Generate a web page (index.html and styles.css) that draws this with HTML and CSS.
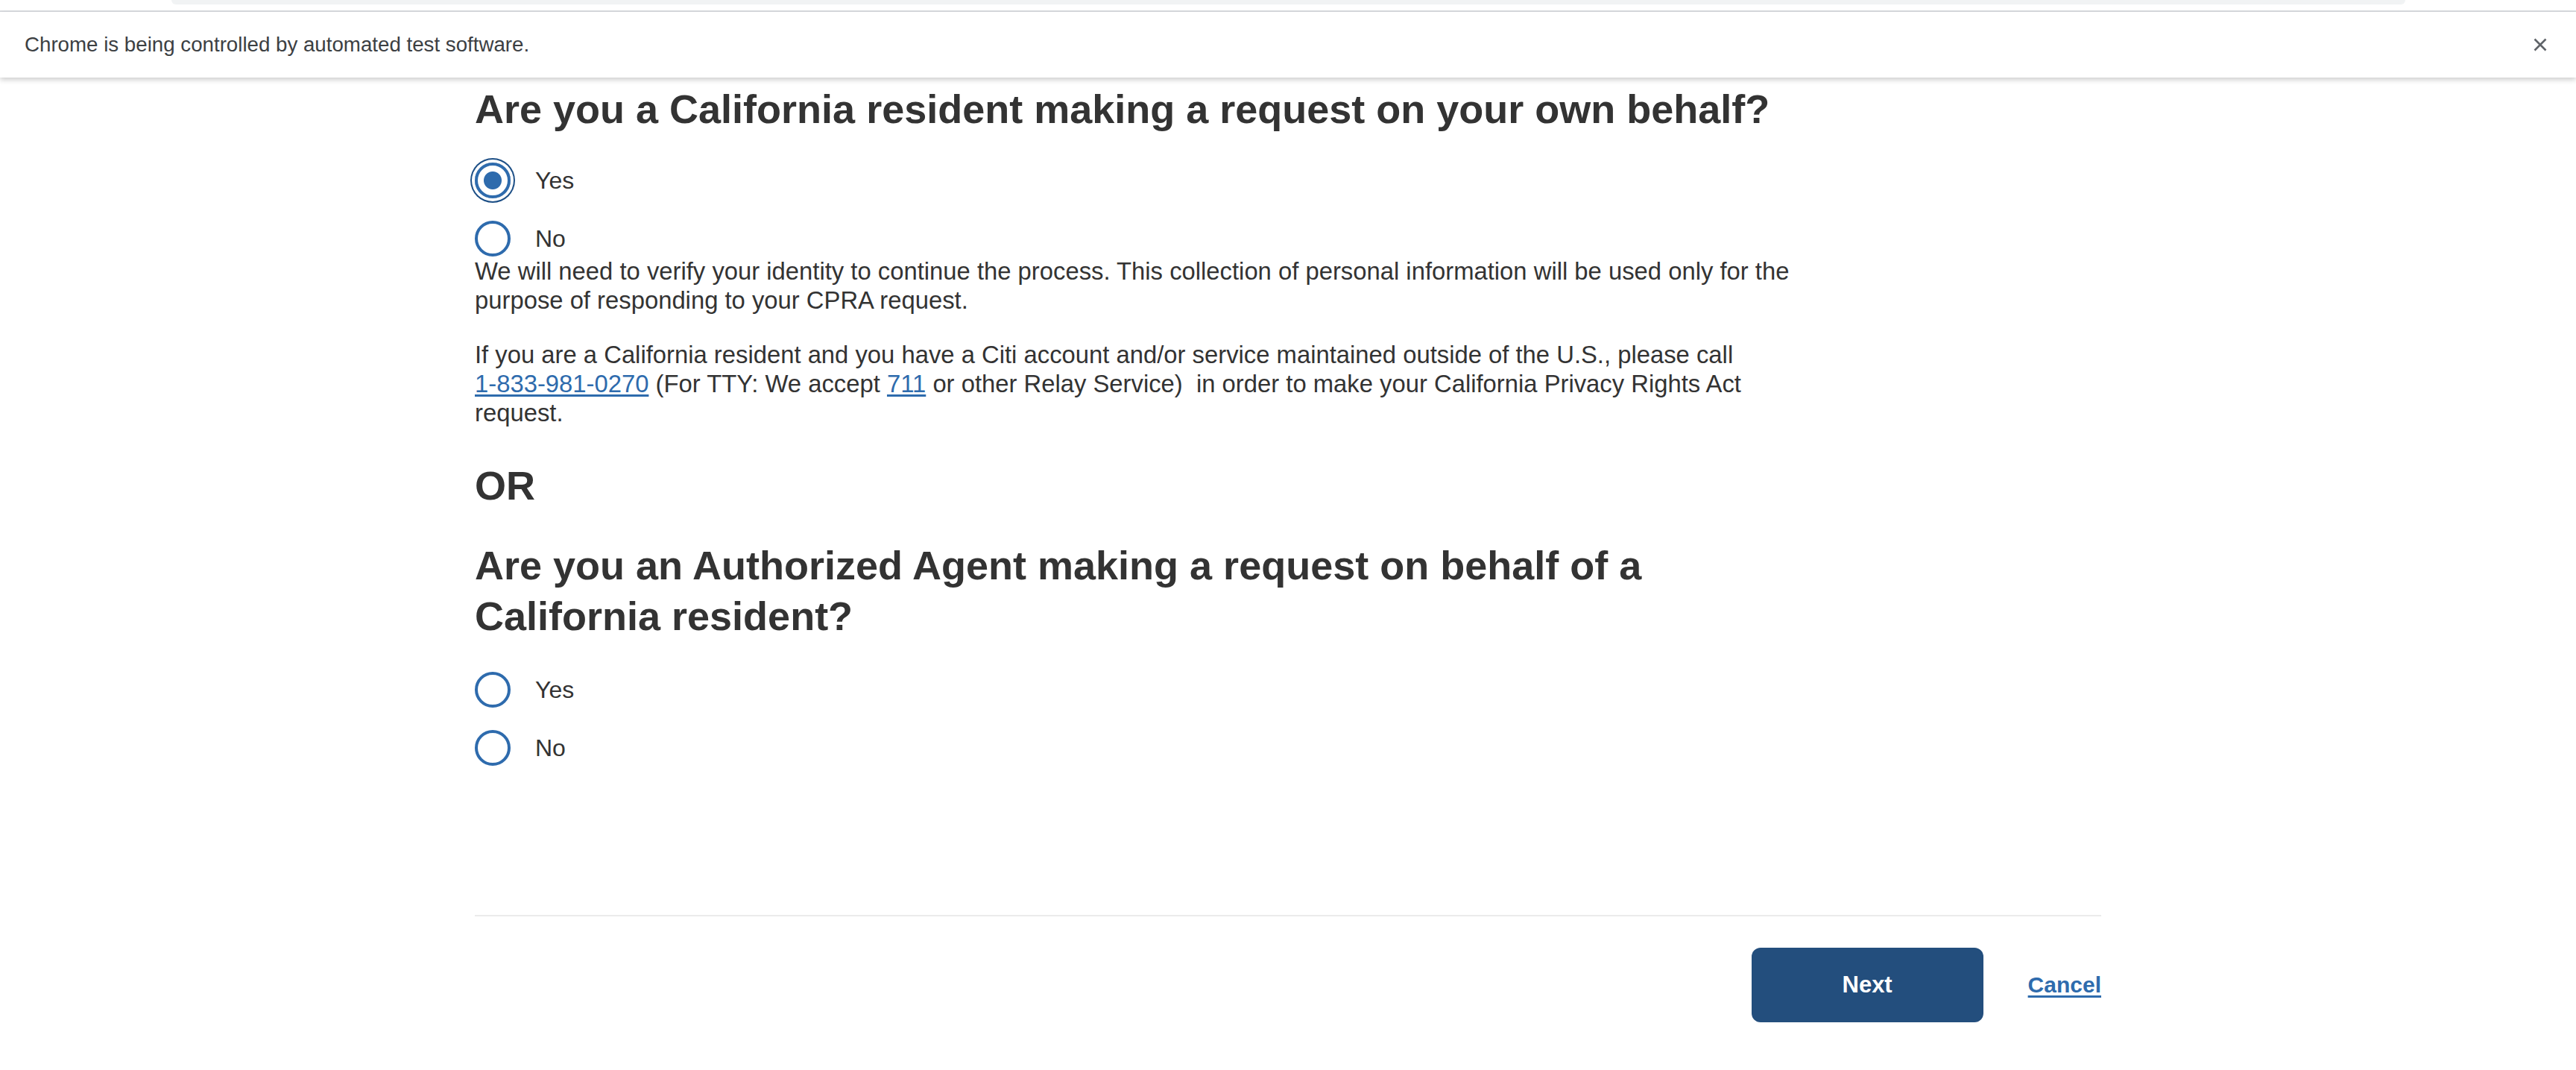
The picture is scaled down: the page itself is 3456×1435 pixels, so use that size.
FILE: index.html
```html
<!DOCTYPE html>
<html lang="en">
<head>
<meta charset="utf-8">
<title>CPRA Request</title>
<link rel="stylesheet" href="styles.css">
</head>
<body>
<div class="chrome"><div class="chrome-pill"></div></div>
<div class="infobar">
  <span class="infobar-text">Chrome is being controlled by automated test software.</span>
  <svg class="infobar-close" width="18" height="18" viewBox="0 0 18 18" aria-label="Close"><path d="M1.5 1.5 L16.5 16.5 M16.5 1.5 L1.5 16.5" stroke="#5f6368" stroke-width="2.6" stroke-linecap="butt" fill="none"/></svg>
</div>
<main class="page">
  <div class="col">
    <h1 class="heading">Are you a California resident making a request on your own behalf?</h1>
    <div class="radios">
      <label class="radio"><input type="radio" name="own" class="radio-input radio-focus" checked><span>Yes</span></label>
      <label class="radio"><input type="radio" name="own" class="radio-input"><span>No</span></label>
    </div>
    <p class="text">We will need to verify your identity to continue the process. This collection of personal information will be used only for the purpose of responding to your CPRA request.</p>
    <p class="text text-gap">If you are a California resident and you have a Citi account and/or service maintained outside of the U.S., please call <a class="link" href="#">1-833-981-0270</a>&nbsp;(For TTY: We accept <a class="link" href="#">711</a> or other Relay Service)&nbsp; in order to make your California Privacy Rights Act request.</p>
    <h2 class="heading or">OR</h2>
    <h2 class="heading heading-gap">Are you an Authorized Agent making a request on behalf of a California resident?</h2>
    <div class="radios radios-2">
      <label class="radio"><input type="radio" name="agent" class="radio-input"><span>Yes</span></label>
      <label class="radio"><input type="radio" name="agent" class="radio-input"><span>No</span></label>
    </div>
  </div>
  <div class="divider"></div>
  <div class="actions">
    <button class="btn-next" type="button">Next</button>
    <a class="cancel" href="#">Cancel</a>
  </div>
</main>
</body>
</html>
```

FILE: styles.css
```css
* { box-sizing: border-box; }
html, body { margin: 0; padding: 0; background: #ffffff; }
body { font-family: "Liberation Sans", Arial, sans-serif; color: #333333; }

.chrome { height: 16px; border-bottom: 2px solid #dadce0; }
.chrome-pill { margin-left: 230px; width: 2997px; height: 6px; background: #f1f3f4; border-radius: 0 0 18px 18px; }

.infobar {
  height: 88px;
  display: flex;
  align-items: center;
  justify-content: space-between;
  padding: 0 39px 0 33px;
  box-shadow: 0 3px 7px rgba(0, 0, 0, 0.2);
  font-family: "Liberation Sans", Arial, sans-serif;
  font-size: 27.7px;
  color: #3c4043;
}
.infobar-close { display: block; }

.page { width: 2182px; margin: 0 auto; padding-top: 8px; }
.col { width: 1790px; }

.heading { margin: 0; font-size: 54px; line-height: 68px; font-weight: 700; color: #333333; }
.or { margin-top: 44px; }
.heading-gap { margin-top: 39px; }

.radios { margin-top: 38px; display: flex; flex-direction: column; gap: 30px; }
.radios-2 { margin-top: 41px; }
.radio { display: flex; align-items: center; gap: 33px; height: 48px; font-size: 32px; color: #333333; }
.radio-input {
  appearance: none;
  -webkit-appearance: none;
  margin: 0;
  width: 48px;
  height: 48px;
  border: 4px solid #2e6bad;
  border-radius: 50%;
  background: #ffffff;
  flex: none;
}
.radio-input:checked { background: radial-gradient(circle, #2e6bad 0 11.5px, #ffffff 12.5px); }
.radio-focus { box-shadow: 0 0 0 4px #ffffff, 0 0 0 6px #1d4f86; }

.text { margin: 0; font-size: 32.8px; line-height: 39px; color: #333333; }
.text-gap { margin-top: 34px; }
.link { color: #2e6bad; white-space: nowrap; text-decoration: underline; text-decoration-thickness: 3px; text-underline-offset: 3px; }

.divider { margin-top: 200px; height: 2px; background: #ebebeb; }

.actions { margin-top: 42px; display: flex; justify-content: flex-end; align-items: center; gap: 60px; }
.btn-next {
  width: 311px;
  height: 100px;
  border: 0;
  border-radius: 12px;
  background: #234e7d;
  color: #ffffff;
  font-family: "Liberation Sans", Arial, sans-serif;
  font-size: 31px;
  font-weight: 700;
}
.cancel { color: #2e6bad; font-size: 30px; font-weight: 700; text-decoration: underline; text-decoration-thickness: 3px; text-underline-offset: 4px; }
```
